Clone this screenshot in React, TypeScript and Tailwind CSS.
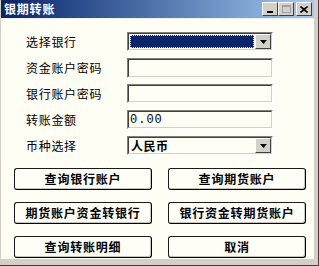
import React from "react";

const font = { fontFamily: '"Noto Sans CJK SC", "Liberation Sans", sans-serif' };

function Sunken({ children, className = "" }: { children?: React.ReactNode; className?: string }) {
  return (
    <div className={"border border-t-[#808080] border-l-[#808080] border-b-white border-r-white " + className}>
      <div className="h-full border border-t-[#404040] border-l-[#404040] border-b-[#d4d0c8] border-r-[#d4d0c8] bg-[#fffef4] flex items-center">
        {children}
      </div>
    </div>
  );
}

function Arrow() {
  return (
    <div className="w-[16px] h-full bg-[#d4d0c8] border border-t-white border-l-white border-b-[#404040] border-r-[#404040] flex items-center justify-center shrink-0">
      <svg width="7" height="4" viewBox="0 0 7 4">
        <polygon points="0,0 7,0 3.5,4" fill="#000" />
      </svg>
    </div>
  );
}

function Row({ label, children }: { label: string; children: React.ReactNode }) {
  return (
    <div className="flex items-center h-[20px]">
      <div className="w-[126px] pl-[25px] text-[12px] tracking-[0.7px] text-black leading-none">{label}</div>
      <div className="w-[146px] h-full">{children}</div>
    </div>
  );
}

function Btn({ label }: { label: string }) {
  return (
    <div className="w-[138px] h-[22px] rounded-[3px] border border-[#1a1a1a] border-r-[#000] border-b-[#000] bg-[#fffef6] shadow-[inset_-1px_-1px_0_#c8c6bc] flex items-center justify-center text-[12px] font-bold tracking-[0.8px] text-black leading-none">
      {label}
    </div>
  );
}

export default function App() {
  return (
    <div style={font} className="w-[319px] h-[266px] bg-[#d4d0c8] flex flex-col pl-[1px] pr-[4px] pb-[6px] border-r border-b border-[#404040]">
      <div className="h-[18px] shrink-0 flex items-center justify-between bg-gradient-to-r from-[#0a246a] to-[#a6caf0] pl-[3px] pr-[2px]">
        <span className="text-white font-bold text-[12px] tracking-[0.8px] leading-none">银期转账</span>
        <div className="flex items-center">
          <div className="w-[16px] h-[14px] bg-[#d4d0c8] border border-t-white border-l-white border-b-[#404040] border-r-[#404040] flex items-end justify-center pb-[2px]">
            <div className="w-[6px] h-[2px] bg-black" />
          </div>
          <div className="w-[16px] h-[14px] bg-[#d4d0c8] border border-t-white border-l-white border-b-[#404040] border-r-[#404040] flex items-center justify-center">
            <div className="w-[9px] h-[8px] border border-[#a0a0a0] border-t-2" />
          </div>
          <div className="ml-[2px] w-[16px] h-[14px] bg-[#d4d0c8] border border-t-white border-l-white border-b-[#404040] border-r-[#404040] flex items-center justify-center">
            <svg width="8" height="7" viewBox="0 0 8 7">
              <path d="M0.5 0.5 L7.5 6.5 M7.5 0.5 L0.5 6.5" stroke="#000" strokeWidth="1.6" />
            </svg>
          </div>
        </div>
      </div>
      <div className="flex-1 bg-[#fffef4] border-t border-[#f0efe6] pt-[13px] flex flex-col">
        <div className="flex flex-col gap-[6px]">
          <Row label="选择银行">
            <Sunken className="h-[19px]">
              <div className="flex-1 h-full p-[1px]">
                <div className="h-full bg-[#0a246a] border border-dotted border-[#f4e8b0]" />
              </div>
              <Arrow />
            </Sunken>
          </Row>
          <Row label="资金账户密码">
            <Sunken className="h-[20px]" />
          </Row>
          <Row label="银行账户密码">
            <Sunken className="h-[19px]" />
          </Row>
          <Row label="转账金额">
            <Sunken className="h-[19px]">
              <span className="pl-[1px] text-[12px] leading-none tracking-[1px]" style={{ fontFamily: '"Liberation Mono", monospace' }}>0.00</span>
            </Sunken>
          </Row>
          <Row label="币种选择">
            <Sunken className="h-[19px]">
              <span className="flex-1 pl-[2px] text-[12px] font-bold leading-none tracking-[0.5px]">人民币</span>
              <Arrow />
            </Sunken>
          </Row>
        </div>
        <div className="mt-[12px] pl-[13px] flex flex-col gap-[12px]">
          <div className="flex gap-[16px]">
            <Btn label="查询银行账户" />
            <Btn label="查询期货账户" />
          </div>
          <div className="flex gap-[16px]">
            <Btn label="期货账户资金转银行" />
            <Btn label="银行资金转期货账户" />
          </div>
          <div className="flex gap-[16px]">
            <Btn label="查询转账明细" />
            <Btn label="取消" />
          </div>
        </div>
      </div>
    </div>
  );
}
